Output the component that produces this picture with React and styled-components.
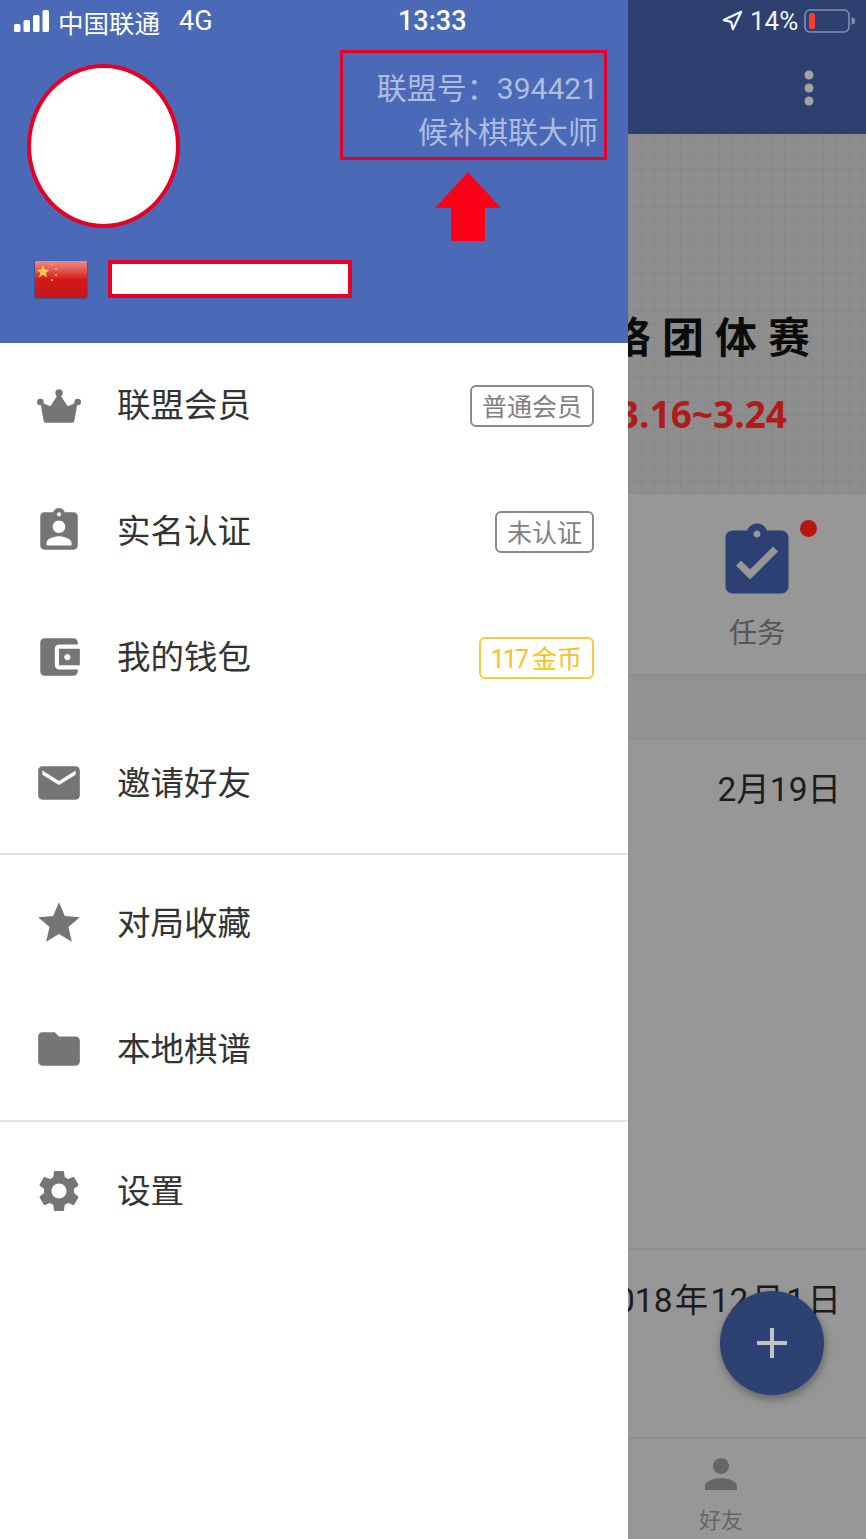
import React from "react";
import styled, { createGlobalStyle } from "styled-components";
import {
  MdAssignmentInd,
  MdAccountBalanceWallet,
  MdEmail,
  MdStar,
  MdFolder,
  MdSettings,
  MdAssignmentTurnedIn,
  MdPerson,
} from "react-icons/md";
import { LuNavigation } from "react-icons/lu";

const FONT = `Roboto, "Noto Sans CJK SC", sans-serif`;

const GlobalStyle = createGlobalStyle`
  html, body {
    margin: 0;
    padding: 0;
    background: #979797;
  }
  * {
    box-sizing: border-box;
  }
`;

const Screen = styled.div`
  display: flex;
  width: 866px;
  height: 1539px;
  overflow: hidden;
  font-family: ${FONT};
`;

const Drawer = styled.aside`
  display: flex;
  flex-direction: column;
  flex: 0 0 628px;
  background: #fff;
`;

const Header = styled.header`
  flex: 0 0 343px;
  padding: 0 21px 0 0;
  background: #4a69b7;
`;

const StatusBar = styled.div`
  display: flex;
  align-items: center;
  height: 42px;
  color: #fff;
`;

const Carrier = styled.div`
  display: flex;
  align-items: center;
  flex: 0 0 398px;
  padding-left: 14px;
  font-size: 25.5px;
`;

const CarrierName = styled.span`
  margin: 0 19px 0 9px;
`;

const NetworkType = styled.span`
  font-size: 27px;
`;

const Time = styled.span`
  font-size: 27px;
  font-weight: 500;
`;

const TopRow = styled.div`
  display: flex;
  justify-content: space-between;
  padding: 8px 0 0 27px;
`;

const Avatar = styled.div`
  width: 153px;
  height: 164px;
  margin-top: 14px;
  border: 4px solid #e60026;
  border-radius: 50%;
  background: #fff;
`;

const IdColumn = styled.div`
  display: flex;
  flex-direction: column;
`;

const IdBox = styled.div`
  display: flex;
  flex-direction: column;
  justify-content: center;
  width: 267px;
  height: 110px;
  padding: 12px 6px 0 0;
  border: 3.5px solid #e60026;
  color: #aebce0;
  font-size: 30px;
  line-height: 44px;
  text-align: right;
`;

const ArrowIcon = styled.svg`
  display: block;
  width: 66px;
  height: 69px;
  margin: 12px 0 0 95px;
`;

const NameRow = styled.div`
  display: flex;
  align-items: center;
  gap: 21px;
  margin-top: 19px;
  padding-left: 35px;
`;

const Flag = styled.svg`
  display: block;
  width: 52px;
  height: 36px;
  filter: drop-shadow(0 1px 1px rgba(0, 0, 0, 0.45));
`;

const NameBox = styled.div`
  width: 244px;
  height: 38px;
  border: 4px solid #e60026;
  background: #fff;
`;

const Menu = styled.nav`
  display: flex;
  flex-direction: column;
`;

const Row = styled.div`
  display: flex;
  align-items: center;
  height: 126px;
  padding: 0 34px;
`;

const RowIcon = styled.span`
  display: flex;
  flex: 0 0 50px;
  height: 50px;
  margin: 0 33px 2px 0;
  color: #757575;
  font-size: 50px;
`;

const RowLabel = styled.span`
  flex: 1;
  padding-bottom: 7px;
  color: #333;
  font-size: 33.5px;
`;

const Badge = styled.span`
  display: flex;
  align-items: center;
  height: 42px;
  padding: 0 10px 3px;
  border: 2px solid ${(p) => (p.$gold ? "#fcc93a" : "#8a8a8a")};
  border-radius: 6px;
  color: ${(p) => (p.$gold ? "#fcc021" : "#808080")};
  font-size: 25px;
`;

const BadgeAmount = styled.span`
  margin-right: 5px;
  letter-spacing: -2px;
`;

const Divider = styled.hr`
  width: 100%;
  height: 2px;
  margin: ${(p) => p.$margin};
  border: 0;
  background: #e4e4e4;
`;

const Backdrop = styled.main`
  position: relative;
  display: flex;
  flex-direction: column;
  flex: 1;
  min-width: 0;
  background: #979797;
`;

const AppBar = styled.div`
  display: flex;
  flex-direction: column;
  flex: 0 0 134px;
  background: #2d4070;
  color: #f2f4f8;
`;

const SystemIcons = styled.div`
  display: flex;
  align-items: center;
  height: 42px;
  padding-left: 93px;
  font-size: 26px;
`;

const Percent = styled.span`
  margin: 0 6px 0 7px;
`;

const MoreIcon = styled.svg`
  display: block;
  width: 10px;
  height: 36px;
  margin: 28px 0 0 176px;
`;

const Banner = styled.div`
  display: flex;
  flex-direction: column;
  flex: 0 0 360px;
  padding: 171px 56px 0 0;
  overflow: hidden;
  align-items: flex-end;
  background-color: #8e8e8e;
  background-image:
    repeating-linear-gradient(0deg, rgba(0, 0, 0, 0.04) 0 1px, transparent 1px 13px),
    repeating-linear-gradient(90deg, rgba(0, 0, 0, 0.04) 0 1px, transparent 1px 13px);
`;

const BannerTitle = styled.div`
  flex: none;
  color: #0b0b0b;
  font-family: "Noto Sans CJK SC", serif;
  font-size: 42px;
  font-weight: 700;
  line-height: 60px;
  letter-spacing: 11px;
  margin-right: -11px;
  white-space: nowrap;
`;

const BannerDate = styled.div`
  flex: none;
  margin: 24px 23px 0 0;
  color: #b01c1c;
  font-family: "Open Sans", sans-serif;
  font-size: 37px;
  font-weight: 700;
  line-height: 50px;
  white-space: nowrap;
`;

const Shortcuts = styled.div`
  display: flex;
  justify-content: center;
  flex: 0 0 182px;
  padding: 26px 0 0 20px;
  border-bottom: 2px solid #8e8e8e;
`;

const Shortcut = styled.div`
  position: relative;
  display: flex;
  flex-direction: column;
  align-items: center;
  color: #555;
  font-size: 28px;
  line-height: 40px;
`;

const TaskIcon = styled(MdAssignmentTurnedIn)`
  display: block;
  margin-bottom: 10px;
  color: #2d4073;
  font-size: 84px;
`;

const RedDot = styled.span`
  position: absolute;
  top: 0;
  right: -18px;
  width: 17px;
  height: 17px;
  border-radius: 50%;
  background: #b8170e;
`;

const SectionGap = styled.div`
  flex: 0 0 62px;
  background: #929292;
`;

const DateRow = styled.div`
  display: flex;
  justify-content: flex-end;
  flex: ${(p) => `0 0 ${p.$height}px`};
  padding: ${(p) => p.$top}px 25px 0 0;
  overflow: hidden;
  border-top: 2px solid #8e8e8e;
  color: #1c1c1c;
  font-size: 33.5px;
  line-height: 44px;
  white-space: nowrap;
`;

const DateText = styled.span`
  flex: none;
  word-spacing: ${(p) => (p.$tight ? "-6px" : "0")};
`;

const TabBar = styled.div`
  display: flex;
  flex: 1;
  padding-left: 93px;
  border-top: 2px solid #8e8e8e;
`;

const Tab = styled.div`
  display: flex;
  flex-direction: column;
  align-items: center;
  width: 0;
  color: #666;
  font-size: 22px;
  line-height: 30px;
  white-space: nowrap;
`;

const TabIcon = styled(MdPerson)`
  flex: none;
  margin: 11px 0 8px;
  color: #666;
  font-size: 48px;
`;

const Fab = styled.button`
  position: absolute;
  top: 1291px;
  left: 92px;
  display: flex;
  align-items: center;
  justify-content: center;
  width: 104px;
  height: 104px;
  padding: 0;
  border: 0;
  border-radius: 50%;
  background: #2d4173;
  box-shadow: 1px 4px 8px rgba(0, 0, 0, 0.35);
`;

function CrownIcon() {
  return (
    <svg viewBox="101 29 150 150" width="50" height="50" fill="#757575">
      <circle cx="176" cy="68" r="11" />
      <circle cx="120" cy="95" r="10" />
      <circle cx="232" cy="95" r="10" />
      <path d="M120 95 L150 108 L176 68 L202 108 L232 95 L222 152 Q221 157 216 157 L136 157 Q131 157 130 152 Z" />
    </svg>
  );
}

function SignalBars() {
  return (
    <svg width="35" height="22" viewBox="0 0 35 22" fill="#fff">
      <rect x="0" y="14" width="6.5" height="8" rx="1.5" />
      <rect x="9.5" y="10" width="6.5" height="12" rx="1.5" />
      <rect x="19" y="5" width="6.5" height="17" rx="1.5" />
      <rect x="28.5" y="0" width="6.5" height="22" rx="1.5" />
    </svg>
  );
}

function Battery() {
  return (
    <svg width="52" height="24" viewBox="0 0 52 24">
      <rect x="1" y="1" width="44" height="22" rx="5" fill="none" stroke="#7f8fb8" strokeWidth="1.6" />
      <rect x="5" y="4" width="6" height="16" rx="2.5" fill="#f5402c" />
      <path d="M47.5 8 L51 10 L51 14 L47.5 16 Z" fill="#7f8fb8" />
    </svg>
  );
}

function ChinaFlag() {
  return (
    <Flag viewBox="0 0 52 36">
      <defs>
        <linearGradient id="flagGloss" x1="0" y1="0" x2="0" y2="1">
          <stop offset="0" stopColor="#ee8c88" />
          <stop offset="0.45" stopColor="#dc2c27" />
          <stop offset="0.5" stopColor="#d31a1a" />
          <stop offset="1" stopColor="#c41618" />
        </linearGradient>
      </defs>
      <rect width="52" height="36" rx="1" fill="url(#flagGloss)" />
      <path
        d="M8 4 L9.8 8.6 L14.5 8.9 L10.8 11.8 L12 16.4 L8 13.8 L4 16.4 L5.2 11.8 L1.5 8.9 L6.2 8.6 Z"
        fill="#f6c94a"
      />
      <circle cx="17" cy="3.5" r="1.2" fill="#eda24f" />
      <circle cx="21" cy="8" r="1.2" fill="#eda24f" />
      <circle cx="21" cy="14" r="1.2" fill="#eda24f" />
      <circle cx="17" cy="19" r="1.2" fill="#eda24f" />
    </Flag>
  );
}

const topItems = [
  { icon: <CrownIcon />, label: "联盟会员", badge: "普通会员" },
  { icon: <MdAssignmentInd />, label: "实名认证", badge: "未认证" },
  {
    icon: <MdAccountBalanceWallet />,
    label: "我的钱包",
    badge: (
      <span>
        <BadgeAmount>117</BadgeAmount>金币
      </span>
    ),
    gold: true,
  },
  { icon: <MdEmail />, label: "邀请好友" },
];

const middleItems = [
  { icon: <MdStar />, label: "对局收藏" },
  { icon: <MdFolder />, label: "本地棋谱" },
];

const bottomItems = [{ icon: <MdSettings />, label: "设置" }];

function MenuRows({ items }) {
  return items.map((item) => (
    <Row key={item.label}>
      <RowIcon>{item.icon}</RowIcon>
      <RowLabel>{item.label}</RowLabel>
      {item.badge && <Badge $gold={item.gold}>{item.badge}</Badge>}
    </Row>
  ));
}

export default function App() {
  return (
    <Screen>
      <GlobalStyle />
      <Drawer>
        <Header>
          <StatusBar>
            <Carrier>
              <SignalBars />
              <CarrierName>中国联通</CarrierName>
              <NetworkType>4G</NetworkType>
            </Carrier>
            <Time>13:33</Time>
          </StatusBar>
          <TopRow>
            <Avatar />
            <IdColumn>
              <IdBox>
                <div>联盟号：394421</div>
                <div>候补棋联大师</div>
              </IdBox>
              <ArrowIcon viewBox="0 0 66 69">
                <path d="M33 0 L66 36 L50 36 L50 69 L16 69 L16 36 L0 36 Z" fill="#ff0019" />
              </ArrowIcon>
            </IdColumn>
          </TopRow>
          <NameRow>
            <ChinaFlag />
            <NameBox />
          </NameRow>
        </Header>
        <Menu>
          <MenuRows items={topItems} />
          <Divider $margin="6px 0 6px" />
          <MenuRows items={middleItems} />
          <Divider $margin="7px 0 7px" />
          <MenuRows items={bottomItems} />
        </Menu>
      </Drawer>
      <Backdrop>
        <AppBar>
          <SystemIcons>
            <LuNavigation size={22} strokeWidth={2.4} />
            <Percent>14%</Percent>
            <Battery />
          </SystemIcons>
          <MoreIcon viewBox="0 0 10 36">
            <circle cx="5" cy="5" r="4.5" fill="#a3a3a3" />
            <circle cx="5" cy="18" r="4.5" fill="#a3a3a3" />
            <circle cx="5" cy="31" r="4.5" fill="#a3a3a3" />
          </MoreIcon>
        </AppBar>
        <Banner>
          <BannerTitle>网络团体赛</BannerTitle>
          <BannerDate>3.16~3.24</BannerDate>
        </Banner>
        <Shortcuts>
          <Shortcut>
            <TaskIcon />
            任务
            <RedDot />
          </Shortcut>
        </Shortcuts>
        <SectionGap />
        <DateRow $height={510} $top={28}>
          <DateText>2月19日</DateText>
        </DateRow>
        <DateRow $height={189} $top={29}>
          <DateText $tight>2018 年 12 月 1 日</DateText>
        </DateRow>
        <TabBar>
          <Tab>
            <TabIcon />
            好友
          </Tab>
        </TabBar>
        <Fab aria-label="add">
          <svg width="32" height="32" viewBox="0 0 32 32">
            <path d="M16 1 V31 M1 16 H31" stroke="#c4c4c4" strokeWidth="4" />
          </svg>
        </Fab>
      </Backdrop>
    </Screen>
  );
}
